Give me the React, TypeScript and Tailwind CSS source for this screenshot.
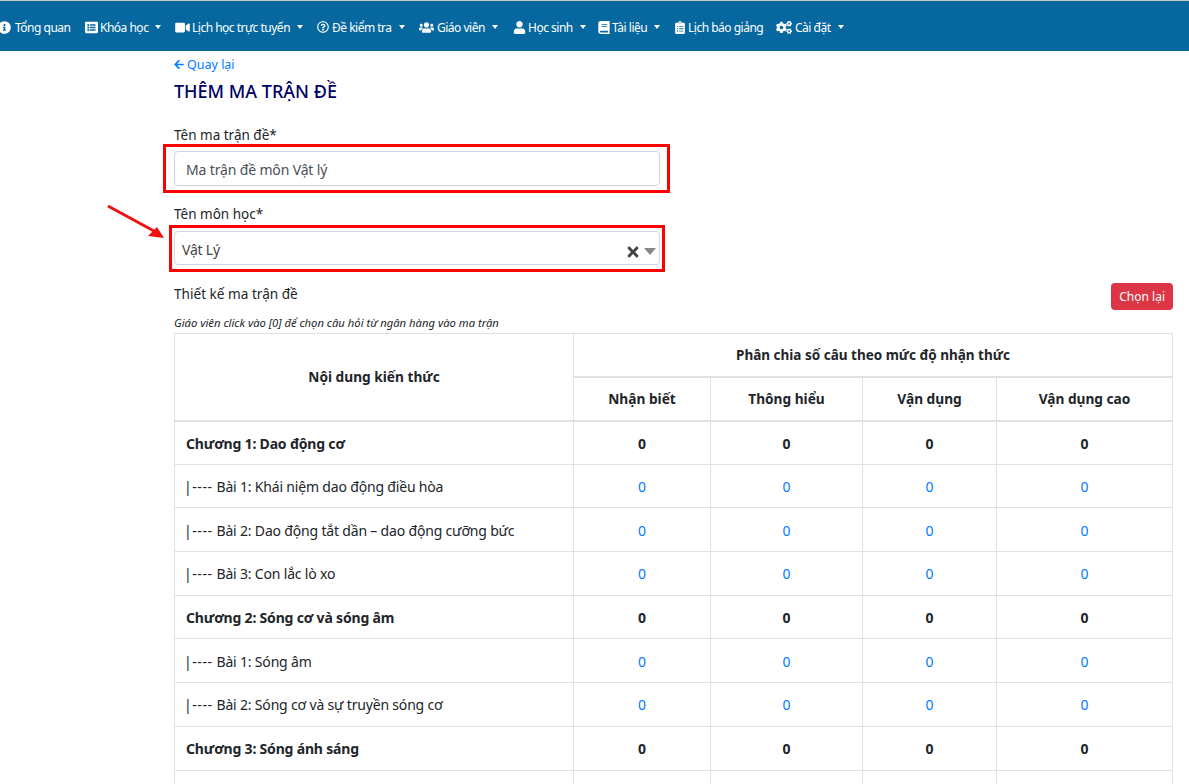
import { FaArrowLeft, FaBook, FaClipboardList, FaCogs, FaInfoCircle, FaListAlt, FaRegQuestionCircle, FaTimes, FaUser, FaUsers, FaVideo } from "react-icons/fa";
import type { IconType } from "react-icons";

const navItems: { label: string; icon: IconType; caret?: boolean; cls: string; iconCls: string }[] = [
  { label: "Tổng quan", icon: FaInfoCircle, cls: "w-[87px] -ml-[2px]", iconCls: "w-[13px] h-[13px] mr-[4px]" },
  { label: "Khóa học", icon: FaListAlt, caret: true, cls: "w-[90px]", iconCls: "w-[13px] h-[13px] mr-[2px]" },
  { label: "Lịch học trực tuyến", icon: FaVideo, caret: true, cls: "w-[142px]", iconCls: "w-[15px] h-[13px] mr-[2px]" },
  { label: "Đề kiểm tra", icon: FaRegQuestionCircle, caret: true, cls: "w-[102px]", iconCls: "w-[12px] h-[12px] mr-[3px]" },
  { label: "Giáo viên", icon: FaUsers, caret: true, cls: "w-[94px]", iconCls: "w-[15px] h-[13px] mr-[3px]" },
  { label: "Học sinh", icon: FaUser, caret: true, cls: "w-[85px]", iconCls: "w-[13px] h-[13px] mr-[2px]" },
  { label: "Tài liệu", icon: FaBook, caret: true, cls: "w-[77px]", iconCls: "w-[12px] h-[13px] mr-[2px]" },
  { label: "Lịch báo giảng", icon: FaClipboardList, cls: "w-[101px]", iconCls: "w-[10px] h-[13px] mr-[3px]" },
  { label: "Cài đặt", icon: FaCogs, caret: true, cls: "w-[90px]", iconCls: "w-[16px] h-[13px] mr-[3px]" },
];

const rows: { label: string; bold?: boolean }[] = [
  { label: "Chương 1: Dao động cơ", bold: true },
  { label: "Bài 1: Khái niệm dao động điều hòa" },
  { label: "Bài 2: Dao động tắt dần – dao động cưỡng bức" },
  { label: "Bài 3: Con lắc lò xo" },
  { label: "Chương 2: Sóng cơ và sóng âm", bold: true },
  { label: "Bài 1: Sóng âm" },
  { label: "Bài 2: Sóng cơ và sự truyền sóng cơ" },
  { label: "Chương 3: Sóng ánh sáng", bold: true },
];

const levels = ["Nhận biết", "Thông hiểu", "Vận dụng", "Vận dụng cao"];

function Caret() {
  return <span className="ml-[7px] inline-block border-x-[3.5px] border-t-[4px] border-x-transparent border-t-white" />;
}

export default function App() {
  return (
    <div className="relative h-[784px] overflow-hidden bg-white text-[14px] leading-[21px] text-[#212529] font-['Noto_Sans','Open_Sans',sans-serif]">
      <div className="h-px bg-[#c9c9c9]" />
      <nav className="flex h-[50px] items-center bg-[#07689f] pt-[2px] text-[12px] tracking-[-0.5px] text-white">
        {navItems.map((item) => (
          <a key={item.label} className={`flex shrink-0 items-center whitespace-nowrap ${item.cls}`}>
            <item.icon className={`shrink-0 ${item.iconCls}`} />
            {item.label}
            {item.caret && <Caret />}
          </a>
        ))}
      </nav>

      <main className="ml-[174px] mr-[16px]">
        <a className="mt-[3px] flex items-center text-[12.5px] text-[#007bff]">
          <FaArrowLeft className="mr-[3px] h-[11px] w-[10px]" />
          Quay lại
        </a>
        <h1 className="mt-[3px] text-[18px] font-medium leading-[27px] text-[#000066]">THÊM MA TRẬN ĐỀ</h1>

        <div className="mt-[20px] w-[486px]">
          <label className="block text-[13.5px]">Tên ma trận đề*</label>
          <div className="mt-[5px] flex h-[35px] items-center rounded border border-[#ced4da] px-[11px] tracking-[-0.15px] text-[#495057]">
            <span className="mt-[1px]">Ma trận đề môn Vật lý</span>
          </div>
          <label className="mt-[18px] block text-[13.5px]">Tên môn học*</label>
          <div className="mt-[6px] flex h-[34px] items-center rounded border border-[#ced4da] pl-[7px] pr-[3px] text-[#444]">
            <span className="mt-[2px] flex-1 tracking-[-0.2px]">Vật Lý</span>
            <FaTimes className="mr-[5px] mt-[7px] h-[16px] w-[12px] text-[#444]" />
            <span className="mt-[7px] inline-block border-x-[6px] border-t-[7px] border-x-transparent border-t-[#888]" />
          </div>
        </div>

        <div className="mt-[18px] flex items-start justify-between">
          <span className="text-[13.6px]">Thiết kế ma trận đề</span>
          <button className="h-[27px] rounded bg-[#dc3545] px-[8px] text-[12px] leading-[18px] text-white">Chọn lại</button>
        </div>
        <p className="mt-[4px] h-[19px] text-[11.25px] italic leading-[18px]">
          Giáo viên click vào [0] để chọn câu hỏi từ ngân hàng vào ma trận
        </p>

        <table className="w-[998px] table-fixed border-collapse">
          <colgroup>
            <col className="w-[399px]" />
            <col className="w-[137px]" />
            <col className="w-[152px]" />
            <col className="w-[134px]" />
            <col className="w-[176px]" />
          </colgroup>
          <thead className="font-bold text-[13.7px]">
            <tr className="h-[43px]">
              <th rowSpan={2} className="border border-b-2 border-[#dee2e6] text-center">Nội dung kiến thức</th>
              <th colSpan={4} className="border border-b-2 border-[#dee2e6] pt-[2px] text-center text-[13.5px]">
                Phân chia số câu theo mức độ nhận thức
              </th>
            </tr>
            <tr className="h-[44px]">
              {levels.map((l) => (
                <th key={l} className="border border-b-2 border-[#dee2e6] text-center">{l}</th>
              ))}
            </tr>
          </thead>
          <tbody>
            {rows.map((r) => (
              <tr key={r.label} className="h-[43.7px]">
                <td className={`border border-[#dee2e6] pt-[1px] tracking-[-0.18px] ${r.bold ? "px-[11px] font-bold" : "px-[9px]"}`}>
                  {!r.bold && <span className="mr-[4px] tracking-[0.55px]">|----</span>}
                  {r.label}
                </td>
                {levels.map((l) => (
                  <td key={l} className={`border border-[#dee2e6] pt-[1px] text-center ${r.bold ? "font-bold" : "text-[#007bff]"}`}>
                    0
                  </td>
                ))}
              </tr>
            ))}
            <tr className="h-[43.7px]">
              <td className="border border-[#dee2e6]" />
              {levels.map((l) => (
                <td key={l} className="border border-[#dee2e6]" />
              ))}
            </tr>
          </tbody>
        </table>
      </main>

      {/* annotations drawn on top of the screenshot */}
      <div className="absolute left-[163px] top-[144px] h-[49px] w-[507px] border-[3px] border-[#ff0000]" />
      <div className="absolute left-[169px] top-[225px] h-[47px] w-[496px] border-[3px] border-[#ff0000]" />
      <svg className="absolute left-[100px] top-[200px]" width="70" height="45" viewBox="0 0 70 45">
        <line x1="8" y1="6" x2="54" y2="31" stroke="#ee1111" strokeWidth="3" />
        <polygon points="57,27 48,36 64,38" fill="#ee1111" />
      </svg>
    </div>
  );
}
